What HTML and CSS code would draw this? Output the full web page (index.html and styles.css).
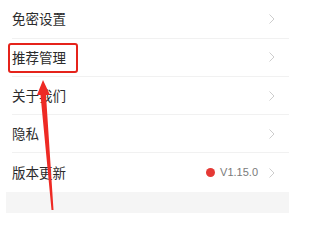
FILE: index.html
```html
<!DOCTYPE html>
<html lang="zh">
<head>
<meta charset="utf-8">
<link rel="stylesheet" href="styles.css">
</head>
<body>
<div class="page">
  <div class="list">
    <div class="row"><span class="label">免密设置</span><span class="right"><svg class="chev" width="6" height="10" viewBox="0 0 6 10"><polyline points="0.5,0.5 5,5 0.5,9.5"/></svg></span></div>
    <div class="row"><span class="label">推荐管理</span><span class="right"><svg class="chev" width="6" height="10" viewBox="0 0 6 10"><polyline points="0.5,0.5 5,5 0.5,9.5"/></svg></span></div>
    <div class="row"><span class="label">关于我们</span><span class="right"><svg class="chev" width="6" height="10" viewBox="0 0 6 10"><polyline points="0.5,0.5 5,5 0.5,9.5"/></svg></span></div>
    <div class="row"><span class="label">隐私</span><span class="right"><svg class="chev" width="6" height="10" viewBox="0 0 6 10"><polyline points="0.5,0.5 5,5 0.5,9.5"/></svg></span></div>
    <div class="row last"><span class="label">版本更新</span><span class="right"><span class="dot"></span><span class="ver">V1.15.0</span><svg class="chev" width="6" height="10" viewBox="0 0 6 10"><polyline points="0.5,0.5 5,5 0.5,9.5"/></svg></span></div>
  </div>
  <div class="gap"></div>
  <div class="highlight"></div>
  <svg class="arrow" width="289" height="218" viewBox="0 0 289 218">
    <polygon points="43,80 50,95 46,95 53.5,210 51.5,210 40.5,95 37,95"/>
  </svg>
</div>
</body>
</html>
```
FILE: styles.css
```css
html, body {
  margin: 0;
  padding: 0;
  background: #ffffff;
}
.page {
  position: relative;
  width: 289px;
  height: 218px;
  overflow: hidden;
  font-family: "Noto Sans CJK SC", "Noto Sans", sans-serif;
}
.list {
  padding-top: 0.4px;
}
.row {
  margin-left: 12px;
  height: 37.25px;
  border-bottom: 1px solid #f1f1f1;
  display: flex;
  align-items: center;
  justify-content: space-between;
  padding-right: 14px;
}
.row.last {
  border-bottom: none;
  height: 38.25px;
}
.label {
  font-size: 13.5px;
  color: #2b2b2b;
  line-height: 1;
}
.right {
  display: flex;
  align-items: center;
}
.chev {
  display: block;
  fill: none;
  stroke: #cdcdcd;
  stroke-width: 1;
}
.dot {
  width: 9px;
  height: 9px;
  border-radius: 50%;
  background: #e53935;
  margin-right: 5px;
}
.ver {
  font-family: "Liberation Sans", Arial, sans-serif;
  font-size: 11px;
  color: #7a7a7a;
  margin-right: 11px;
  line-height: 1;
}
.gap {
  margin-left: 6px;
  height: 21px;
  background: #f5f5f5;
}
.highlight {
  position: absolute;
  left: 8px;
  top: 43px;
  width: 66px;
  height: 26px;
  border: 2px solid #e5231b;
  border-radius: 3px;
}
.arrow {
  position: absolute;
  left: 0;
  top: 0;
}
.arrow polygon {
  fill: #ee2a24;
}
```
